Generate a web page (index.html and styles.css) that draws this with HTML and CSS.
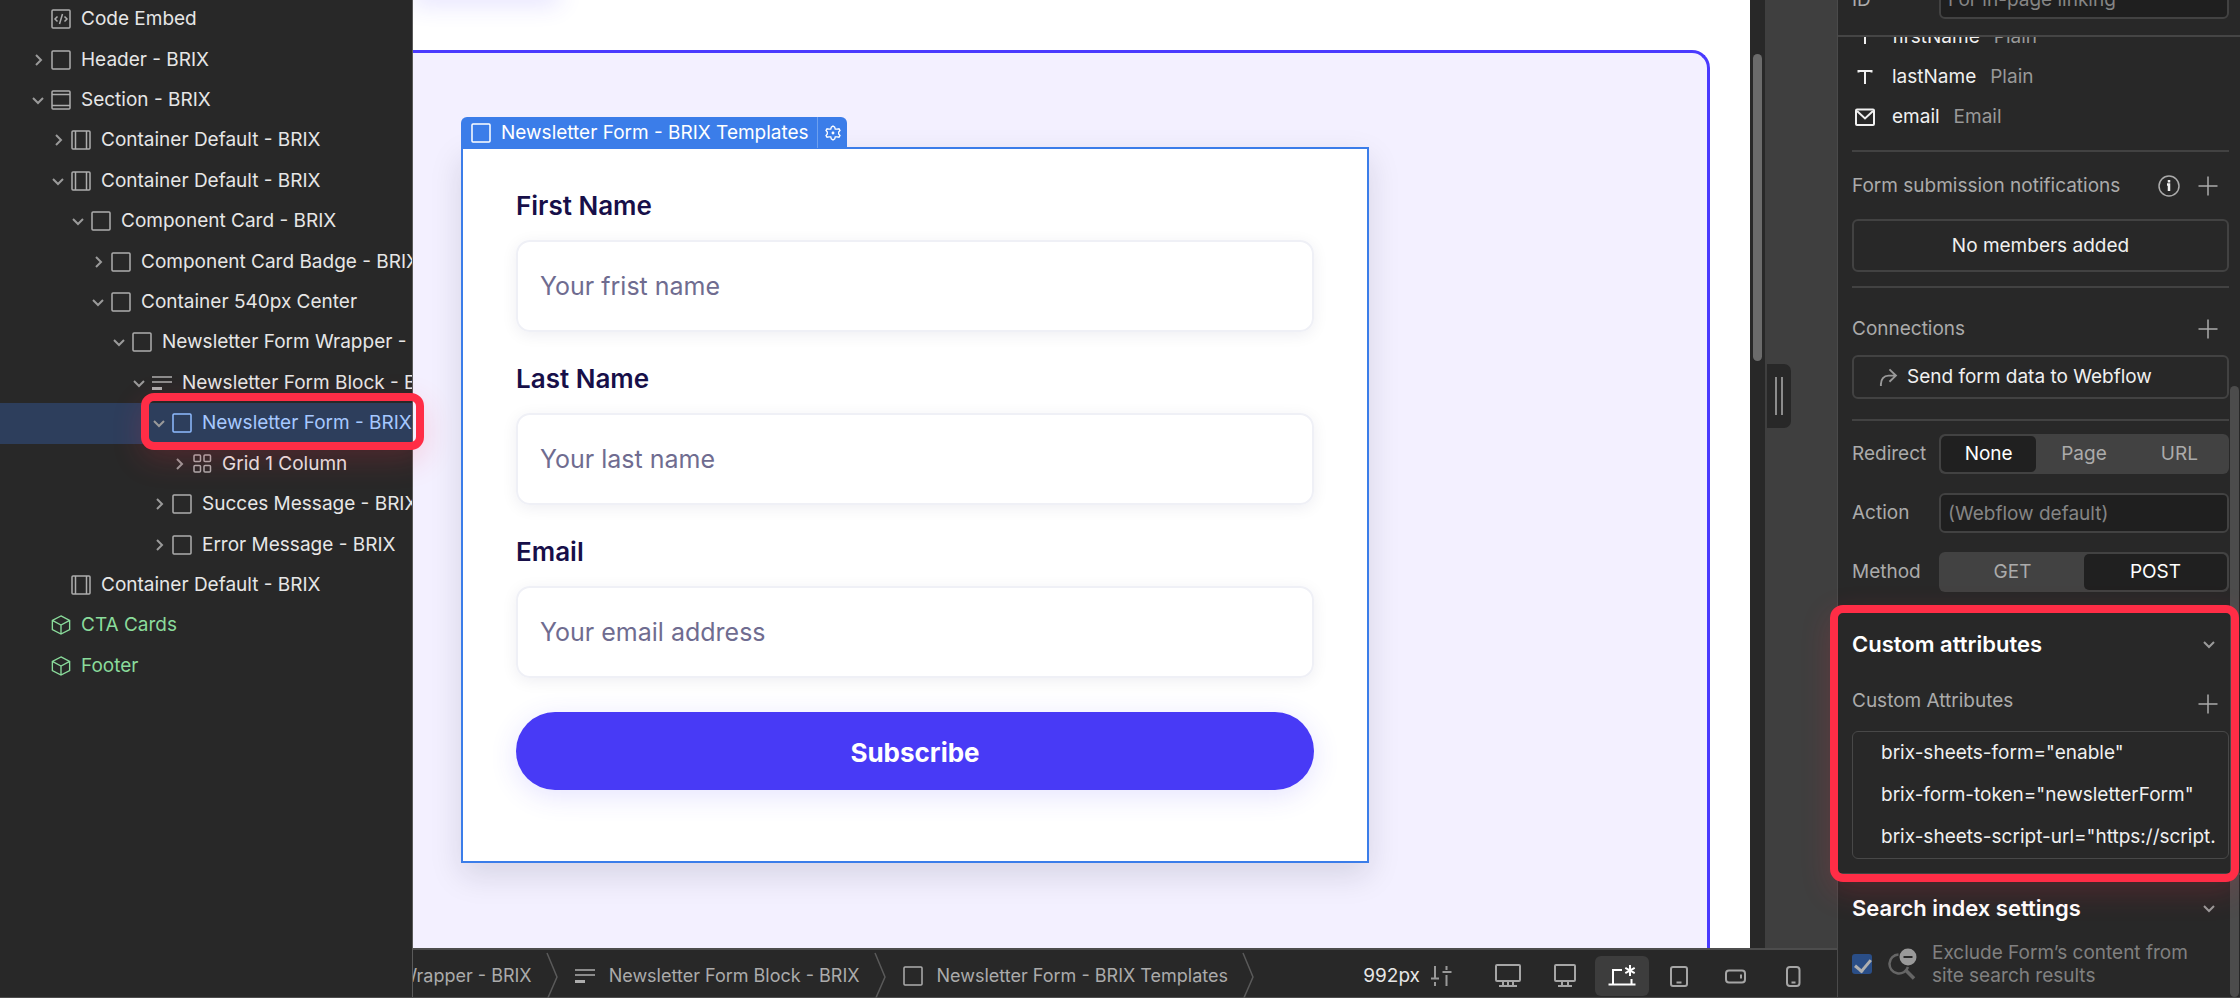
FILE: index.html
```html
<!DOCTYPE html>
<html lang="en">
<head>
	<meta charset="UTF-8">
	<title>Newsletter Form - BRIX Templates</title>
	<link rel="stylesheet" href="styles.css">
</head>
<body>
	<svg class="sprite" aria-hidden="true">
		<symbol id="right" viewBox="0 0 14 14"><path d="M5 2l5 5-5 5"/></symbol>
		<symbol id="down" viewBox="0 0 14 14"><path d="M2 5l5 5 5-5"/></symbol>
		<symbol id="box" viewBox="0 0 20 20"><rect x="1" y="1" width="18" height="18" rx="1"/></symbol>
		<symbol id="section" viewBox="0 0 20 20"><rect x="1" y="1" width="18" height="18" rx="1"/><path d="M1 4.5h18M1 15.5h18"/></symbol>
		<symbol id="container" viewBox="0 0 20 20"><rect x="1" y="1" width="18" height="18" rx="1"/><path d="M4.5 1v18M15.5 1v18"/></symbol>
		<symbol id="embed" viewBox="0 0 20 20"><rect x="1" y="1" width="18" height="18" rx="1"/><path d="M6.500 7.500L4 10l2.500 2.500M13.500 7.500L16 10l-2.500 2.500M11.500 5l-3 10"/></symbol>
		<symbol id="form" viewBox="0 0 20 20"><path d="M0 4h20M0 9h20"/><path d="M0 15.500h10" stroke-width="3"/></symbol>
		<symbol id="grid" viewBox="0 0 20 20"><rect x="2" y="1" width="6.500" height="6.500" rx="1"/><rect x="12" y="1" width="6.500" height="6.500" rx="1"/><rect x="2" y="11.500" width="6.500" height="6.500" rx="1"/><rect x="12" y="11.500" width="6.500" height="6.500" rx="1"/></symbol>
		<symbol id="cube" viewBox="0 0 22 22"><path d="M11 1l9.500 5v10L11 21l-9.500-5V6zM1.500 6L11 11l9.500-5M11 11v10"/></symbol>
		<symbol id="plus" viewBox="0 0 20 20"><path d="M10 .5v19M.5 10h19"/></symbol>
		<symbol id="gear" viewBox="0 0 16 16"><path d="M8 1l1.700 1.200.5 1.900 1.800.1 2-.4 1 1.700-1.300 1.500v2L15 10.500l-1 1.700-2-.4-1.800.1-.5 1.900L8 15l-1.700-1.200-.5-1.900-1.800-.1-2 .4-1-1.700L2.300 9V7L1 5.500l1-1.700 2 .4 1.800-.1.5-1.900z"/><circle cx="8" cy="8" r=".8"/></symbol>
		<symbol id="text" viewBox="0 0 20 20"><path d="M3.500 5.500V4h13v1.500M10 4v13"/></symbol>
		<symbol id="mail" viewBox="0 0 20 20"><rect x="1" y="2.500" width="18" height="15.500" rx="1"/><path d="M2 4l8 7.500L18 4"/></symbol>
		<symbol id="arrow" viewBox="0 0 20 20"><path d="M2 19v-2c0-5 3-9 8-9h8M11 1.500L17.800 8 11 14.500"/></symbol>
	</svg>

	<div class="app">
		<aside class="tree">
			<ul>
				<li class="lv0"><span class="gap"></span><svg class="icon"><use href="#embed"/></svg>Code Embed</li>
				<li class="lv0"><svg class="chev"><use href="#right"/></svg><svg class="icon"><use href="#box"/></svg>Header - BRIX</li>
				<li class="lv0"><svg class="chev"><use href="#down"/></svg><svg class="icon"><use href="#section"/></svg>Section - BRIX</li>
				<li class="lv1"><svg class="chev"><use href="#right"/></svg><svg class="icon"><use href="#container"/></svg>Container Default - BRIX</li>
				<li class="lv1"><svg class="chev"><use href="#down"/></svg><svg class="icon"><use href="#container"/></svg>Container Default - BRIX</li>
				<li class="lv2"><svg class="chev"><use href="#down"/></svg><svg class="icon"><use href="#box"/></svg>Component Card - BRIX</li>
				<li class="lv3"><svg class="chev"><use href="#right"/></svg><svg class="icon"><use href="#box"/></svg>Component Card Badge - BRIX</li>
				<li class="lv3"><svg class="chev"><use href="#down"/></svg><svg class="icon"><use href="#box"/></svg>Container 540px Center</li>
				<li class="lv4"><svg class="chev"><use href="#down"/></svg><svg class="icon"><use href="#box"/></svg>Newsletter Form Wrapper - BRIX</li>
				<li class="lv5"><svg class="chev"><use href="#down"/></svg><svg class="icon"><use href="#form"/></svg>Newsletter Form Block - BRIX</li>
				<li class="lv6 selected"><svg class="chev"><use href="#down"/></svg><svg class="icon"><use href="#box"/></svg>Newsletter Form - BRIX</li>
				<li class="lv7"><svg class="chev"><use href="#right"/></svg><svg class="icon"><use href="#grid"/></svg>Grid 1 Column</li>
				<li class="lv6"><svg class="chev"><use href="#right"/></svg><svg class="icon"><use href="#box"/></svg>Succes Message - BRIX</li>
				<li class="lv6"><svg class="chev"><use href="#right"/></svg><svg class="icon"><use href="#box"/></svg>Error Message - BRIX</li>
				<li class="lv1"><span class="gap"></span><svg class="icon"><use href="#container"/></svg>Container Default - BRIX</li>
				<li class="lv0 component"><span class="gap"></span><svg class="icon"><use href="#cube"/></svg>CTA Cards</li>
				<li class="lv0 component"><span class="gap"></span><svg class="icon"><use href="#cube"/></svg>Footer</li>
			</ul>
		</aside>

		<main class="stage">
			<div class="viewport">
				<div class="canvas">
					<div class="above"><div class="above-card"></div></div>
					<section class="section">
						<form class="card">
							<div class="tag">
								<span class="tag-name"><svg class="icon"><use href="#box"/></svg>Newsletter Form - BRIX Templates</span>
								<button type="button" class="tag-gear" aria-label="Settings"><svg><use href="#gear"/></svg></button>
							</div>
							<div class="fields">
								<div class="field">
									<label for="first">First Name</label>
									<input id="first" type="text" placeholder="Your frist name">
								</div>
								<div class="field">
									<label for="last">Last Name</label>
									<input id="last" type="text" placeholder="Your last name">
								</div>
								<div class="field">
									<label for="email">Email</label>
									<input id="email" type="email" placeholder="Your email address">
								</div>
							</div>
							<button type="button" class="subscribe">Subscribe</button>
						</form>
					</section>
				</div>
				<div class="track"><div class="thumb"></div></div>
				<div class="gutter"><div class="handle"></div></div>
			</div>

			<footer class="bar">
				<nav class="crumbs">
					<a href="#">Newsletter Form Wrapper - BRIX</a>
					<svg class="sep" viewBox="0 0 12 48"><path d="M1 1l10 24L1 48"/></svg>
					<a href="#"><svg class="icon"><use href="#form"/></svg>Newsletter Form Block - BRIX</a>
					<svg class="sep" viewBox="0 0 12 48"><path d="M1 1l10 24L1 48"/></svg>
					<a href="#"><svg class="icon"><use href="#box"/></svg>Newsletter Form - BRIX Templates</a>
					<svg class="sep" viewBox="0 0 12 48"><path d="M1 1l10 24L1 48"/></svg>
				</nav>
				<div class="size">992px
					<svg viewBox="0 0 22 22"><path d="M5 1v12M1 13.500h8M5 17v4M16.500 1v4M12.500 7h9M16.500 10v11"/></svg>
				</div>
				<div class="breakpoints">
					<button aria-label="1440px and up"><svg viewBox="0 0 28 24"><rect x="2" y="1" width="24" height="16" rx="1"/><path d="M9 17v4M14 17v4M19 17v4M5 22h18"/></svg></button>
					<button aria-label="1280px and up"><svg viewBox="0 0 28 24"><rect x="4" y="1" width="20" height="16" rx="1"/><path d="M11 17v4M17 17v4M7 22h14"/></svg></button>
					<button class="active" aria-label="Desktop"><svg viewBox="0 0 28 24"><path d="M14 6H5v14M.5 20.500h27M23.500 15v5"/><path d="M22 1v11M17.300 3.800l9.400 5.400M26.700 3.800l-9.400 5.400"/></svg></button>
					<button aria-label="Tablet"><svg viewBox="0 0 28 24"><rect x="6" y="3" width="16" height="19" rx="2"/><path d="M11.500 18.500h5"/></svg></button>
					<button aria-label="Mobile landscape"><svg viewBox="0 0 28 24"><rect x="4" y="6.500" width="19" height="12" rx="3"/><path d="M19 10.500v4"/></svg></button>
					<button aria-label="Mobile portrait"><svg viewBox="0 0 28 24"><rect x="8" y="3" width="12.500" height="19" rx="3"/><path d="M12.500 18.500h4"/></svg></button>
				</div>
			</footer>
		</main>

		<aside class="panel">
			<div class="panel-top">
				<label for="id">ID</label>
				<input id="id" class="text" type="text" placeholder="For in-page linking">
			</div>
			<div class="panel-body">
				<ul class="form-fields">
					<li><svg class="icon"><use href="#text"/></svg>firstName <span>Plain</span></li>
					<li><svg class="icon"><use href="#text"/></svg>lastName <span>Plain</span></li>
					<li><svg class="icon"><use href="#mail"/></svg>email <span>Email</span></li>
				</ul>

				<div class="block notifications">
					<div class="head">
						<span>Form submission notifications</span>
						<button class="info" aria-label="Info"><svg viewBox="0 0 22 22"><circle cx="11" cy="11" r="10"/><path class="mark" d="M9 9.500h2V16M11 5v2.500"/></svg></button>
						<button class="add" aria-label="Add"><svg><use href="#plus"/></svg></button>
					</div>
					<div class="empty">No members added</div>
				</div>

				<div class="block connections">
					<div class="head">
						<span>Connections</span>
						<button class="add" aria-label="Add"><svg><use href="#plus"/></svg></button>
					</div>
					<button class="connection"><svg><use href="#arrow"/></svg>Send form data to Webflow</button>
				</div>

				<div class="block settings">
					<div class="row">
						<span>Redirect</span>
						<div class="segments three"><button class="on">None</button><button>Page</button><button>URL</button></div>
					</div>
					<div class="row">
						<label for="action">Action</label>
						<input id="action" class="text" type="text" placeholder="(Webflow default)">
					</div>
					<div class="row">
						<span>Method</span>
						<div class="segments"><button>GET</button><button class="on">POST</button></div>
					</div>
				</div>

				<section class="custom">
					<h2>Custom attributes <button aria-label="Collapse"><svg class="chev"><use href="#down"/></svg></button></h2>
					<div class="head">
						<span>Custom Attributes</span>
						<button class="add" aria-label="Add"><svg><use href="#plus"/></svg></button>
					</div>
					<ul class="attributes">
						<li>brix-sheets-form="enable"</li>
						<li>brix-form-token="newsletterForm"</li>
						<li>brix-sheets-script-url="https://script.</li>
					</ul>
				</section>

				<section class="search">
					<h2>Search index settings <button aria-label="Collapse"><svg class="chev"><use href="#down"/></svg></button></h2>
					<div class="exclude">
						<input id="exclude" type="checkbox" checked>
						<svg class="lens" viewBox="0 0 30 34"><path d="M10.500 7.500A9.500 9.500 0 1 0 20 20"/><path d="M17.500 23l8.500 8.500" stroke-width="3.500"/><circle cx="20" cy="10" r="8.500"/><path class="minus" d="M15.500 10h9"/></svg>
						<label for="exclude">Exclude Form’s content from<br>site search results</label>
					</div>
				</section>
			</div>
			<div class="panel-thumb"></div>
		</aside>

		<div class="mark-tree"></div>
		<div class="mark-panel"></div>
	</div>
</body>
</html>
```
FILE: styles.css
```css
*{
	box-sizing: border-box;
	margin: 0;
	padding: 0;
}
html,body{
	height: 100%;
	overflow: hidden;
}
body{
	background: #282828;
	color: #e6e6e6;
	font-family: Inter, "Liberation Sans", sans-serif;
	font-size: 19px;
	line-height: 24px;
}
button,input{
	font: inherit;
	color: inherit;
	border: 0;
	background: none;
}
ul{
	list-style: none;
}
a{
	color: inherit;
	text-decoration: none;
}
svg{
	fill: none;
	stroke: currentColor;
	stroke-width: 2;
	flex: none;
}
.sprite{
	position: absolute;
	width: 0;
	height: 0;
}
.app{
	position: relative;
	display: flex;
	height: 100%;
	border-bottom: 1px solid #4d4d4d;
}
.icon{
	width: 20px;
	height: 20px;
	color: #adadad;
	stroke-width: 1.5;
}
.chev{
	width: 14px;
	height: 14px;
	color: #9a9a9a;
}

/* navigator */
.tree{
	flex: none;
	width: 413px;
	overflow: hidden;
	border-right: 1px solid #5a5a5a;
}
.tree ul{
	display: grid;
	grid-auto-rows: 1fr;
	height: 687px;
	margin-top: -1px;
}
.tree li{
	display: flex;
	align-items: center;
	white-space: nowrap;
}
.tree .chev,.gap{
	width: 14px;
	margin-right: 6px;
}
.tree .icon{
	margin-right: 10px;
}
.lv0{ padding-left: 31px; }
.lv1{ padding-left: 51px; }
.lv2{ padding-left: 71px; }
.lv3{ padding-left: 91px; }
.lv4{ padding-left: 112px; }
.lv5{ padding-left: 132px; }
.lv6{ padding-left: 152px; }
.lv7{ padding-left: 172px; }
.selected{
	background: #2d3e5c;
	color: #a6c8ff;
}
.selected .icon{
	color: #8fbcff;
}
.component,.component .icon{
	color: #8adb9b;
}

/* canvas */
.stage{
	flex: 1;
	min-width: 0;
	display: flex;
	flex-direction: column;
}
.viewport{
	flex: 1;
	min-height: 0;
	display: flex;
}
.canvas{
	flex: 1;
	background: #fff;
	display: flex;
	flex-direction: column;
	overflow: hidden;
}
.above{
	flex: none;
	height: 50px;
}
.above-card{
	width: 146px;
	height: 20px;
	margin-top: -20px;
	box-shadow: 0 4px 24px rgba(74,58,255,.16);
}
.section{
	flex: 1;
	margin-right: 40px;
	padding: 94px 338px 0 48px;
	background: #f3f0ff;
	border: solid #4a3aff;
	border-width: 3px 3px 0 0;
	border-radius: 0 18px 0 0;
}
.card{
	position: relative;
	display: flex;
	flex-direction: column;
	gap: 34px;
	padding: 41px 53px 71px;
	background: #fff;
	border: 2px solid #3b7de9;
	box-shadow: 0 12px 30px rgba(20,20,43,.13);
}
.tag{
	position: absolute;
	left: -2px;
	bottom: calc(100% + 1px);
	display: flex;
	height: 31px;
	background: #3b7de9;
	color: #fff;
	border-radius: 6px 6px 0 0;
}
.tag-name{
	display: flex;
	align-items: center;
	gap: 10px;
	padding: 0 8px 0 10px;
}
.tag .icon{
	color: #fff;
}
.tag-gear{
	display: flex;
	align-items: center;
	padding: 0 6px 0 7px;
	border-left: 1px solid #6ea0ef;
}
.tag-gear svg{
	width: 16px;
	height: 16px;
	stroke-width: 1.3;
}
.fields{
	display: flex;
	flex-direction: column;
	gap: 31px;
}
.field{
	display: flex;
	flex-direction: column;
	gap: 18px;
}
.field label{
	font-size: 26px;
	line-height: 32px;
	font-weight: 600;
	color: #170f49;
}
.field input{
	height: 92px;
	padding: 0 22px;
	font-size: 25px;
	border: 2px solid #eff0f6;
	border-radius: 14px;
	box-shadow: 0 3px 16px rgba(19,18,66,.07);
}
.field input::placeholder{
	color: #6f6c90;
}
.subscribe{
	height: 78px;
	padding-top: 3px;
	font-size: 26px;
	font-weight: 700;
	color: #fff;
	background: #483af6;
	border-radius: 39px;
	box-shadow: 0 6px 28px rgba(74,58,255,.14);
}
.track{
	width: 15px;
	padding: 54px 3px 0;
	background: #282828;
}
.thumb{
	height: 307px;
	border-radius: 5px;
	background: #6b6b6b;
}
.gutter{
	width: 72px;
	padding: 364px 0 0 2px;
	background: #3f3f3f;
}
.handle{
	width: 24px;
	height: 64px;
	background: #282828;
	border-radius: 0 7px 7px 0;
	padding: 13px 8px;
}
.handle::before{
	content: "";
	display: block;
	height: 38px;
	border: solid #8c8c8c;
	border-width: 0 2px;
}

/* bottom bar */
.bar{
	flex: none;
	display: flex;
	align-items: center;
	height: 49px;
	padding: 5px 17px 0 0;
	background: #282828;
	border-top: 2px solid #4d4d4d;
}
.crumbs{
	flex: 0 1 841px;
	min-width: 0;
	display: flex;
	align-items: center;
	justify-content: flex-end;
	gap: 14px;
	overflow: hidden;
	white-space: nowrap;
	font-size: 18px;
	color: #ababab;
}
.crumbs a{
	display: flex;
	align-items: center;
	gap: 14px;
}
.crumbs a + .sep + a{
	padding-left: 3px;
}
.sep{
	width: 12px;
	height: 48px;
	color: #5a5a5a;
	stroke-width: 1.5;
}
.size{
	display: flex;
	align-items: center;
	gap: 10px;
	margin-left: auto;
	margin-right: 29px;
	color: #e6e6e6;
}
.size svg{
	width: 22px;
	height: 22px;
	color: #999;
}
.breakpoints{
	display: flex;
	gap: 3px;
	color: #a6a6a6;
}
.breakpoints button{
	display: flex;
	align-items: center;
	justify-content: center;
	width: 54px;
	height: 40px;
	border-radius: 6px;
}
.breakpoints svg{
	width: 28px;
	height: 24px;
}
.breakpoints .active{
	background: #3d3d3d;
	color: #fff;
}

/* settings panel */
.panel{
	position: relative;
	flex: none;
	width: 403px;
	display: flex;
	flex-direction: column;
	border-left: 1px solid #4a4a4a;
	color: #ababab;
	overflow: hidden;
}
.panel-top{
	flex: none;
	display: flex;
	align-items: flex-end;
	height: 37px;
	padding: 0 11px 16px 14px;
	border-bottom: 2px solid #454545;
}
.panel-top label,.row label,.row > span{
	width: 87px;
	flex: none;
}
.panel-top label{
	line-height: 38px;
}
.text{
	flex: 1;
	min-width: 0;
	height: 40px;
	padding: 0 7px;
	background: #1f1f1f;
	border: 2px solid #424242;
	border-radius: 6px;
}
.text::placeholder{
	color: #858585;
}
.panel-body{
	flex: 1;
	min-height: 0;
	padding: 0 11px 0 14px;
	overflow: hidden;
}
.form-fields{
	margin-top: -20px;
	padding-bottom: 13px;
	color: #f0f0f0;
}
.form-fields li{
	display: flex;
	align-items: center;
	height: 40px;
	padding-left: 3px;
}
.form-fields .icon{
	margin-right: 17px;
	color: #f0f0f0;
	stroke-width: 2;
}
.form-fields span{
	margin-left: 14px;
	color: #999;
}
.block{
	border-top: 2px solid #424242;
}
.head{
	display: flex;
	align-items: center;
	padding-right: 11px;
}
.head span{
	margin-right: auto;
}
.head button{
	display: flex;
}
.add svg{
	width: 20px;
	height: 20px;
	stroke-width: 1.5;
}
.info{
	margin-right: 18px;
}
.info svg{
	width: 22px;
	height: 22px;
	stroke-width: 1.5;
}
.info .mark{
	stroke: #f0f0f0;
	stroke-width: 2.5;
}
.notifications{
	padding-bottom: 14px;
}
.notifications .head{
	height: 67px;
}
.empty{
	height: 53px;
	line-height: 50px;
	text-align: center;
	color: #f0f0f0;
	border: 2px solid #424242;
	border-radius: 6px;
}
.connections{
	padding: 14px 0 20px;
}
.connections .head{
	height: 53px;
}
.connection{
	display: flex;
	align-items: center;
	gap: 9px;
	width: 100%;
	height: 44px;
	padding-left: 25px;
	color: #f0f0f0;
	border: 2px solid #424242;
	border-radius: 6px;
}
.connection svg{
	width: 19px;
	height: 19px;
	color: #999;
}
.settings{
	display: flex;
	flex-direction: column;
	gap: 19px;
	padding-top: 13px;
}
.row{
	display: flex;
	align-items: center;
}
.segments{
	flex: 1;
	display: grid;
	grid-template-columns: 1fr 1fr;
	height: 40px;
	padding: 2px;
	background: #424242;
	border-radius: 6px;
}
.three{
	grid-template-columns: 1fr 1fr 1fr;
}
.segments .on{
	background: #202020;
	color: #fff;
	border-radius: 5px;
}
h2{
	display: flex;
	align-items: center;
	justify-content: space-between;
	padding-right: 13px;
	font-size: 22px;
	font-weight: 600;
	color: #fff;
}
h2 button{
	display: flex;
}
.custom{
	padding: 25px 0 14px;
}
.custom h2{
	height: 54px;
}
.custom .head{
	height: 60px;
}
.custom .add{
	padding-top: 5px;
}
.attributes{
	padding-left: 28px;
	color: #f0f0f0;
	border: 1px solid #484848;
	border-radius: 6px;
}
.attributes li{
	line-height: 42px;
	white-space: nowrap;
}
.search{
	margin: 0 -11px 0 -14px;
	padding: 0 11px 0 14px;
	border-top: 2px solid #424242;
}
.search h2{
	height: 66px;
}
.exclude{
	display: flex;
	align-items: center;
	color: #808080;
	line-height: 23px;
}
.exclude input{
	appearance: none;
	width: 20px;
	height: 20px;
	border-radius: 3px;
	background: #2a4e87;
}
.exclude input:checked::before{
	content: "";
	display: block;
	width: 7px;
	height: 13px;
	margin: 2px 0 0 6px;
	border: solid #b0b0b0;
	border-width: 0 3px 3px 0;
	transform: rotate(40deg);
}
.lens{
	width: 30px;
	height: 34px;
	margin: 0 14px 0 16px;
	color: #666;
	stroke-width: 2.5;
}
.lens circle{
	fill: #999;
	stroke: none;
}
.lens .minus{
	stroke: #282828;
	stroke-width: 2;
}
.panel-thumb{
	position: absolute;
	right: 1px;
	top: 386px;
	bottom: 0;
	width: 9px;
	border-radius: 5px;
	background: #4c4c4c;
}

/* red highlights */
.mark-tree,.mark-panel{
	position: absolute;
	border: 8px solid #ff2d46;
	border-radius: 13px;
	box-shadow: 0 10px 30px rgba(255,45,70,.18);
}
.mark-tree{
	left: 141px;
	top: 393px;
	width: 283px;
	height: 57px;
}
.mark-panel{
	right: 1px;
	top: 605px;
	width: 409px;
	height: 277px;
}
```
